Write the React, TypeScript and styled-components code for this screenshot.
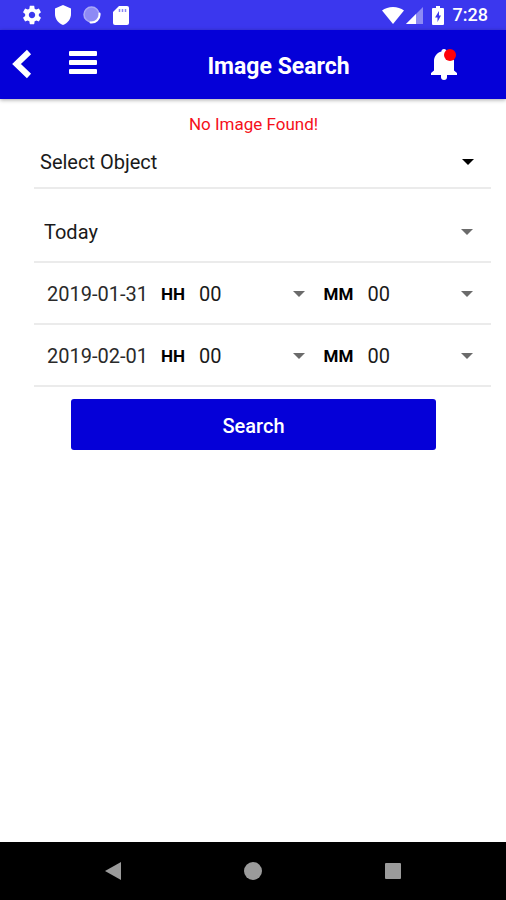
import React, { useState } from 'react';
import styled, { createGlobalStyle } from 'styled-components';

const GlobalStyle = createGlobalStyle`
  *, *::before, *::after { box-sizing: border-box; }
  body {
    margin: 0;
    background: #fff;
    font-family: Roboto, 'Liberation Sans', sans-serif;
  }
  button, select { font-family: inherit; margin: 0; }
`;

const Screen = styled.div`
  display: flex;
  flex-direction: column;
  min-height: 100vh;
  color: #1a1a1a;
`;

const StatusBar = styled.div`
  display: flex;
  align-items: center;
  justify-content: space-between;
  height: 30px;
  padding: 0 18px 0 21px;
  background: #3b37ee;
  color: #fff;
`;

const StatusGroup = styled.div<{ $gap: number }>`
  display: flex;
  align-items: center;
  gap: ${(p) => p.$gap}px;
`;

const Clock = styled.time`
  font-size: 18px;
  font-weight: 500;
  line-height: 20px;
`;

const Header = styled.header`
  display: flex;
  align-items: center;
  height: 69px;
  padding: 0 47px 2px 12px;
  background: #0500d8;
  box-shadow: 0 1px 4px rgba(0, 0, 0, 0.35);
`;

const IconButton = styled.button<{ $width: number }>`
  display: flex;
  flex: none;
  align-items: center;
  justify-content: flex-start;
  width: ${(p) => p.$width}px;
  height: 48px;
  padding: 0;
  border: 0;
  background: none;
  color: #fff;
  cursor: pointer;
`;

const Title = styled.h1`
  flex: 1;
  margin: 0;
  padding-top: 6px;
  font-size: 23px;
  font-weight: 700;
  line-height: 28px;
  text-align: center;
  color: #fff;
`;

const Form = styled.form`
  display: flex;
  flex: 1;
  flex-direction: column;
  padding: 14px 15px 0 34px;
`;

const Message = styled.p`
  margin: 0 18px 0 0;
  font-size: 17px;
  line-height: 22px;
  text-align: center;
  color: #f5101a;
`;

const Row = styled.div<{ $height: number; $inset: number; $end?: number; $gap?: number }>`
  display: flex;
  align-items: center;
  height: ${(p) => p.$height}px;
  margin-top: ${(p) => p.$gap ?? 0}px;
  padding: 2px ${(p) => p.$end ?? 18}px 0 ${(p) => p.$inset}px;
  border-bottom: 2px solid #ebebeb;
`;

const SelectBox = styled.div<{ $dark?: boolean }>`
  display: grid;
  flex: 1;
  min-width: 0;
  align-items: center;
  color: ${(p) => (p.$dark ? '#000' : '#6b6b6b')};

  > * { grid-area: 1 / 1; }
  > svg { justify-self: end; pointer-events: none; }
`;

const Select = styled.select`
  width: 100%;
  height: 32px;
  padding: 0;
  border: 0;
  background: transparent;
  color: #1a1a1a;
  font-size: 20px;
  line-height: 32px;
  appearance: none;
  cursor: pointer;
`;

const DateButton = styled.button`
  flex: none;
  width: 114px;
  padding: 0;
  border: 0;
  background: none;
  color: #2a2a2a;
  font-size: 20px;
  line-height: 32px;
  text-align: left;
  cursor: pointer;
`;

const UnitLabel = styled.label<{ $width: number; $gap?: number }>`
  flex: none;
  width: ${(p) => p.$width}px;
  margin-left: ${(p) => p.$gap ?? 0}px;
  color: #000;
  font-size: 17px;
  font-weight: 700;
  line-height: 32px;
`;

const SearchButton = styled.button`
  height: 51px;
  margin: 12px 55px 0 37px;
  padding: 2px 0 0;
  border: 0;
  border-radius: 3px;
  background: #0500d8;
  color: #fff;
  font-size: 20px;
  font-weight: 500;
  cursor: pointer;
`;

const NavBar = styled.nav`
  display: flex;
  justify-content: center;
  height: 58px;
  background: #000;
`;

const NavButton = styled.button`
  display: flex;
  flex: 0 1 140px;
  align-items: center;
  justify-content: center;
  padding: 0;
  border: 0;
  background: none;
  color: #9b9b9b;
  cursor: pointer;
`;

const GearIcon = () => (
  <svg width="22" height="22" viewBox="0 0 24 24" fill="currentColor" aria-hidden="true">
    <path d="M19.43 12.98c.04-.32.07-.64.07-.98s-.03-.66-.07-.98l2.11-1.65c.19-.15.24-.42.12-.64l-2-3.46c-.12-.22-.39-.3-.61-.22l-2.49 1c-.52-.4-1.08-.73-1.69-.98l-.38-2.65C14.46 2.18 14.25 2 14 2h-4c-.25 0-.46.18-.49.42l-.38 2.65c-.61.25-1.17.59-1.69.98l-2.49-1c-.23-.09-.49 0-.61.22l-2 3.46c-.13.22-.07.49.12.64l2.11 1.65c-.04.32-.07.65-.07.98s.03.66.07.98l-2.11 1.65c-.19.15-.24.42-.12.64l2 3.46c.12.22.39.3.61.22l2.49-1c.52.4 1.08.73 1.69.98l.38 2.65c.03.24.24.42.49.42h4c.25 0 .46-.18.49-.42l.38-2.65c.61-.25 1.17-.59 1.69-.98l2.49 1c.23.09.49 0 .61-.22l2-3.46c.12-.22.07-.49-.12-.64l-2.11-1.65zM12 15.5c-1.93 0-3.5-1.57-3.5-3.5s1.57-3.5 3.5-3.5 3.5 1.57 3.5 3.5-1.57 3.5-3.5 3.5z" />
  </svg>
);

const ShieldIcon = () => (
  <svg width="16" height="20" viewBox="0 0 16 20" fill="currentColor" aria-hidden="true">
    <path d="M8 0 0 3.500V9c0 5 3.300 9 8 11 4.700-2 8-6 8-11V3.500z" />
  </svg>
);

const SyncIcon = () => (
  <svg width="18" height="18" viewBox="0 0 18 18" aria-hidden="true">
    <circle cx="8.500" cy="8.500" r="7.500" fill="#8d8af5" stroke="#aaa8f8" strokeWidth="1.500" />
    <path d="M16.500 7.500a8 8 0 0 1-9 9" fill="none" stroke="#fff" strokeWidth="2" strokeLinecap="round" />
  </svg>
);

const CardIcon = () => (
  <svg width="16" height="19" viewBox="0 0 16 19" aria-hidden="true">
    <path d="M6 0h8a2 2 0 0 1 2 2v15a2 2 0 0 1-2 2H2a2 2 0 0 1-2-2V6z" fill="#fff" />
    <path d="M6.500 3v3M9.500 3v3M12.500 3v3" stroke="#8a87f4" strokeWidth="1.500" />
  </svg>
);

const WifiIcon = () => (
  <svg width="22" height="17" viewBox="0 0 22 17" fill="currentColor" aria-hidden="true">
    <path d="M11 17 0 3.500C3 1.200 6.800 0 11 0s8 1.200 11 3.500z" />
  </svg>
);

const SignalIcon = () => (
  <svg width="17" height="17" viewBox="0 0 17 17" aria-hidden="true">
    <path d="M17 0v17H0z" fill="#8d8af5" />
    <path d="M10 7v10H0z" fill="#fff" />
  </svg>
);

const BatteryIcon = () => (
  <svg width="12" height="19" viewBox="0 0 12 19" aria-hidden="true">
    <path d="M4 0h4v2h3a1 1 0 0 1 1 1v15a1 1 0 0 1-1 1H1a1 1 0 0 1-1-1V3a1 1 0 0 1 1-1h3z" fill="#fff" />
    <path d="M7 5 3 11.500h2.500V16L9 9.500H7z" fill="#3b37ee" />
  </svg>
);

const BackIcon = () => (
  <svg width="20" height="30" viewBox="0 0 20 30" aria-hidden="true">
    <path d="M17 3 4.500 15 17 27" fill="none" stroke="#fff" strokeWidth="6" />
  </svg>
);

const MenuIcon = () => (
  <svg width="28" height="28" viewBox="0 0 28 28" fill="currentColor" aria-hidden="true">
    <rect y="1" width="28" height="5" rx="1" />
    <rect y="10" width="28" height="5" rx="1" />
    <rect y="19" width="28" height="5" rx="1" />
  </svg>
);

const BellIcon = () => (
  <svg width="28" height="32" viewBox="0 0 28 32" aria-hidden="true">
    <path
      d="M13 1c1.600 0 2.600 1 2.600 2.500C20 4.700 23 8.500 23 13v9.500l3 2.500v2H0v-2l3-2.500V13c0-4.500 3-8.300 7.400-9.500C10.400 2 11.400 1 13 1z"
      fill="#fff"
    />
    <path d="M10 27h6v2a3 3 0 0 1-6 0z" fill="#fff" />
    <circle cx="19" cy="7" r="6" fill="#ff0008" />
  </svg>
);

const Caret = () => (
  <svg width="12" height="6" viewBox="0 0 12 6" fill="currentColor" aria-hidden="true">
    <path d="M0 0h12L6 6z" />
  </svg>
);

const pad = (n: number) => String(n).padStart(2, '0');
const HOURS = Array.from({ length: 24 }, (_, i) => pad(i));
const MINUTES = Array.from({ length: 60 }, (_, i) => pad(i));

interface PickerProps {
  id: string;
  options: string[];
  label?: string;
  dark?: boolean;
}

function Picker({ id, options, label, dark }: PickerProps) {
  const [value, setValue] = useState(options[0]);
  return (
    <SelectBox $dark={dark}>
      <Select id={id} aria-label={label} value={value} onChange={(e) => setValue(e.target.value)}>
        {options.map((o) => (
          <option key={o}>{o}</option>
        ))}
      </Select>
      <Caret />
    </SelectBox>
  );
}

function DateTimeRow({ name, date }: { name: string; date: string }) {
  return (
    <Row $height={62} $inset={13}>
      <DateButton type="button">{date}</DateButton>
      <UnitLabel $width={38} htmlFor={`${name}-hour`}>HH</UnitLabel>
      <Picker id={`${name}-hour`} options={HOURS} />
      <UnitLabel $width={44} $gap={19} htmlFor={`${name}-minute`}>MM</UnitLabel>
      <Picker id={`${name}-minute`} options={MINUTES} />
    </Row>
  );
}

export default function App() {
  return (
    <Screen>
      <GlobalStyle />
      <StatusBar>
        <StatusGroup $gap={12}>
          <GearIcon />
          <ShieldIcon />
          <SyncIcon />
          <CardIcon />
        </StatusGroup>
        <StatusGroup $gap={9}>
          <StatusGroup $gap={2}>
            <WifiIcon />
            <SignalIcon />
          </StatusGroup>
          <BatteryIcon />
          <Clock>7:28</Clock>
        </StatusGroup>
      </StatusBar>
      <Header>
        <IconButton $width={57} aria-label="Back"><BackIcon /></IconButton>
        <IconButton $width={57} aria-label="Menu"><MenuIcon /></IconButton>
        <Title>Image Search</Title>
        <IconButton $width={28} aria-label="Notifications"><BellIcon /></IconButton>
      </Header>
      <Form onSubmit={(e) => e.preventDefault()}>
        <Message role="status">No Image Found!</Message>
        <Row $height={54} $inset={6} $end={17}>
          <Picker id="object" label="Object" options={['Select Object']} dark />
        </Row>
        <Row $height={62} $inset={10} $gap={12}>
          <Picker id="period" label="Period" options={['Today', 'Yesterday', 'Last 7 days']} />
        </Row>
        <DateTimeRow name="from" date="2019-01-31" />
        <DateTimeRow name="to" date="2019-02-01" />
        <SearchButton type="submit">Search</SearchButton>
      </Form>
      <NavBar>
        <NavButton aria-label="Back">
          <svg width="16" height="18" viewBox="0 0 16 18" fill="currentColor"><path d="M16 0v18L0 9z" /></svg>
        </NavButton>
        <NavButton aria-label="Home">
          <svg width="18" height="18" viewBox="0 0 18 18" fill="currentColor"><circle cx="9" cy="9" r="9" /></svg>
        </NavButton>
        <NavButton aria-label="Recent apps">
          <svg width="16" height="16" viewBox="0 0 16 16" fill="currentColor"><rect width="16" height="16" rx="1" /></svg>
        </NavButton>
      </NavBar>
    </Screen>
  );
}
